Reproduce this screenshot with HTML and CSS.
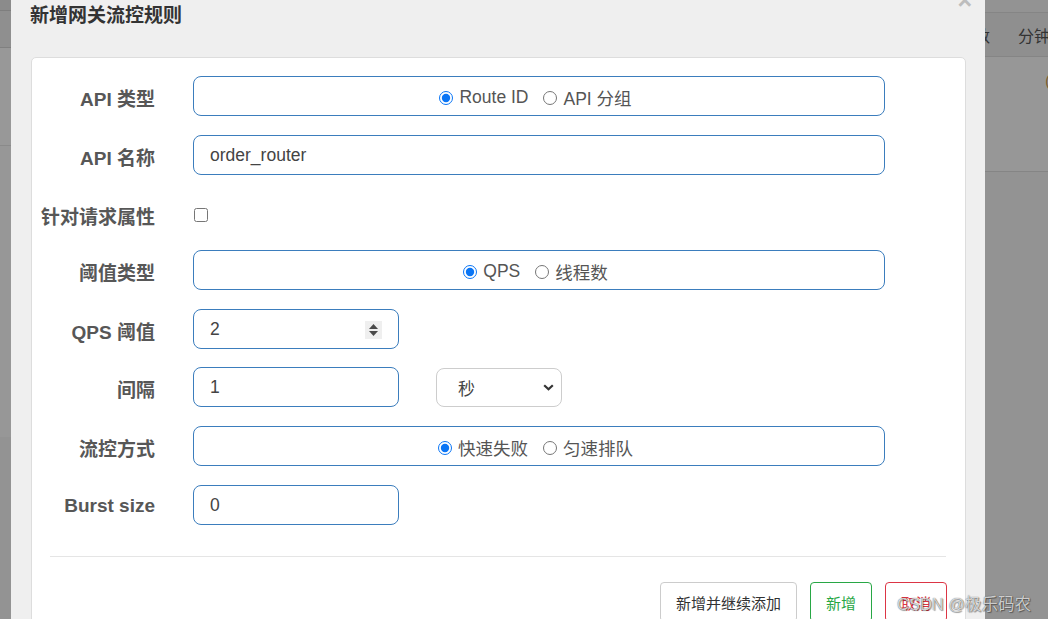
FILE: index.html
```html
<!DOCTYPE html>
<html lang="zh-CN">
<head>
<meta charset="utf-8">
<title>新增网关流控规则</title>
<link rel="stylesheet" href="styles.css">
</head>
<body>
<div class="backdrop">
  <div class="side">
    <div class="s1"></div>
    <div class="s2"></div>
    <div class="s3"></div>
    <div class="s4"></div>
  </div>
  <div class="page">
    <div class="p1"></div>
    <div class="p2"><span class="cut">数</span><span class="col">分钟</span></div>
    <div class="p3"><span class="ico">(</span></div>
  </div>
</div>

<div class="modal">
  <div class="modal-header">
    <h4 class="title">新增网关流控规则</h4>
    <span class="close">×</span>
  </div>
  <div class="panel">
    <div class="form">
      <div class="row">
        <label class="lbl">API 类型</label>
        <div class="ctrl wide radios">
          <label class="opt"><input type="radio" name="t" checked>Route ID</label>
          <label class="opt"><input type="radio" name="t">API 分组</label>
        </div>
      </div>
      <div class="row">
        <label class="lbl">API 名称</label>
        <div class="ctrl wide text">order_router</div>
      </div>
      <div class="row row-check">
        <label class="lbl">针对请求属性</label>
        <input class="check" type="checkbox">
      </div>
      <div class="row">
        <label class="lbl">阈值类型</label>
        <div class="ctrl wide radios">
          <label class="opt"><input type="radio" name="g" checked>QPS</label>
          <label class="opt"><input type="radio" name="g">线程数</label>
        </div>
      </div>
      <div class="row">
        <label class="lbl">QPS 阈值</label>
        <div class="ctrl narrow text num">
          <span class="val">2</span>
          <span class="spin">
            <svg width="17" height="18" viewBox="0 0 17 18"><rect width="17" height="18" fill="#efefef"/><path d="M4 8 L8.5 3 L13 8 Z" fill="#4a4a4a"/><path d="M4 10 L8.5 15 L13 10 Z" fill="#4a4a4a"/></svg>
          </span>
        </div>
      </div>
      <div class="row row-tight">
        <label class="lbl">间隔</label>
        <div class="ctrl narrow text">1</div>
        <div class="select">
          <span>秒</span>
          <svg width="11" height="7" viewBox="0 0 11 7"><path d="M1.2 1.2 L5.5 5.3 L9.8 1.2" fill="none" stroke="#333" stroke-width="2.2"/></svg>
        </div>
      </div>
      <div class="row">
        <label class="lbl">流控方式</label>
        <div class="ctrl wide radios">
          <label class="opt"><input type="radio" name="c" checked>快速失败</label>
          <label class="opt"><input type="radio" name="c">匀速排队</label>
        </div>
      </div>
      <div class="row">
        <label class="lbl">Burst size</label>
        <div class="ctrl narrow text">0</div>
      </div>
    </div>
    <hr class="divider">
    <div class="actions">
      <button class="btn">新增并继续添加</button>
      <button class="btn btn-green">新增</button>
      <button class="btn btn-red">取消</button>
    </div>
  </div>
</div>

<div class="watermark">CSDN @极乐码农</div>
</body>
</html>
```

FILE: styles.css
```css
html, body {
  margin: 0;
  padding: 0;
}
body {
  width: 1048px;
  height: 619px;
  overflow: hidden;
  position: relative;
  background: #939393;
  font-family: "Liberation Sans", "Noto Sans CJK SC", sans-serif;
}

/* page behind the modal */
.backdrop {
  display: flex;
  height: 619px;
}
.side {
  width: 11px;
  display: flex;
  flex-direction: column;
}
.s1 { height: 10px; background: #8b8b8b; border-bottom: 1px solid #7e7e7e; }
.s2 { height: 36px; background: #8f8f8f; border-bottom: 1px solid #808080; }
.s3 { height: 97px; background: #989898; border-bottom: 1px solid #8a8a8a; }
.s4 { height: 291px; background: #979797; }
.page {
  flex: 1;
  display: flex;
  flex-direction: column;
}
.p1 { height: 12px; background: #939393; border-bottom: 1px solid #858585; }
.p2 {
  height: 43px;
  background: #8f8f8f;
  border-bottom: 1px solid #858585;
  display: flex;
  align-items: center;
  justify-content: flex-end;
  overflow: hidden;
  white-space: nowrap;
  color: #333;
  font-size: 16px;
  margin-right: -2px;
}
.cut { margin-right: 28px; }
.p3 {
  height: 114px;
  background: #979797;
  border-bottom: 1px solid #858585;
  display: flex;
  justify-content: flex-end;
  overflow: hidden;
}
.ico {
  color: #7a5a2a;
  font-size: 14px;
  margin-top: 16px;
  margin-right: -2px;
}

/* modal */
.modal {
  position: absolute;
  left: 11px;
  top: 0;
  width: 974px;
  height: 660px;
  box-sizing: border-box;
  padding: 0 19px 0 20px;
  background: #efefef;
}
.modal-header {
  height: 57px;
}
.title {
  margin: 0 0 0 -1px;
  font-size: 19px;
  line-height: 32px;
  font-weight: bold;
  color: #333;
}
.close {
  position: absolute;
  top: -12px;
  right: 13px;
  font-size: 25px;
  font-weight: bold;
  line-height: 25px;
  color: #bdbdbd;
}
.panel {
  background: #fff;
  border: 1px solid #ddd;
  border-radius: 5px;
  padding-top: 18px;
}
.form {
  display: flex;
  flex-direction: column;
  gap: 19px;
}
.row {
  display: flex;
  align-items: center;
  height: 40px;
}
.row-check {
  height: 37px;
  margin: 2px 0 -2px;
}
.row-tight {
  margin-top: -1px;
}
.lbl {
  width: 123px;
  flex: none;
  box-sizing: border-box;
  text-align: right;
  font-size: 19px;
  font-weight: bold;
  color: #575757;
  padding-top: 2px;
}
.ctrl {
  margin-left: 38px;
  height: 40px;
  box-sizing: border-box;
  border: 1px solid #3b7dbd;
  border-radius: 8px;
  background: #fff;
  flex: none;
}
.wide { width: 692px; }
.narrow { width: 206px; }
.text {
  display: flex;
  align-items: center;
  padding-left: 16px;
  font-size: 17.5px;
  color: #444;
}
.num {
  justify-content: space-between;
  padding-right: 16px;
}
.spin {
  display: flex;
  margin-top: 1px;
}
.radios {
  display: flex;
  align-items: center;
  justify-content: center;
  gap: 15px;
  padding-right: 7px;
  padding-top: 3px;
  font-size: 17.5px;
  color: #555;
}
.opt {
  display: flex;
  align-items: center;
}
.opt input {
  margin: 0 6px 0 0;
  width: 14px;
  height: 14px;
  accent-color: #0a75f5;
}
.check {
  margin: 0 0 0 39px;
  width: 14px;
  height: 14px;
}
.select {
  margin-left: 37px;
  width: 126px;
  height: 39px;
  box-sizing: border-box;
  border: 1px solid #cdcdcd;
  border-radius: 8px;
  display: flex;
  align-items: center;
  justify-content: space-between;
  padding: 0 7px 0 21px;
  font-size: 17px;
  color: #444;
}
.divider {
  border: 0;
  border-top: 1px solid #e5e5e5;
  margin: 31px 19px 0 18px;
}
.actions {
  display: flex;
  justify-content: flex-end;
  gap: 13px;
  padding: 25px 18px 0 0;
  height: 60px;
}
.btn {
  height: 40px;
  padding: 0 15px;
  border: 1px solid #ccc;
  border-radius: 4px;
  background: #fff;
  font-family: "Liberation Sans", "Noto Sans CJK SC", sans-serif;
  font-size: 15px;
  color: #333;
}
.btn-green {
  border-color: #28a745;
  color: #28a745;
}
.btn-red {
  border-color: #dc3545;
  color: #dc3545;
}

.watermark {
  position: absolute;
  left: 897px;
  top: 591px;
  font-size: 16.5px;
  color: rgba(255, 255, 255, 0.75);
  text-shadow: 0 0 1px rgba(0, 0, 0, 0.7), 1px 1px 1px rgba(0, 0, 0, 0.35);
  white-space: nowrap;
}
```
